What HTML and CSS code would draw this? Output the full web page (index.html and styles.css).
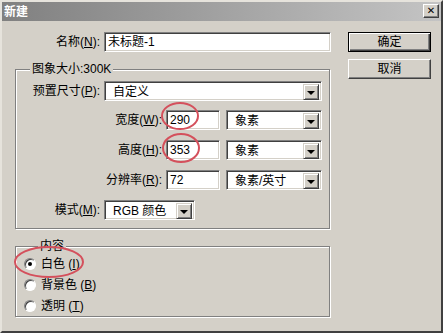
FILE: index.html
```html
<!DOCTYPE html>
<html lang="zh-CN">
<head>
    <meta charset="UTF-8">
    <title>新建</title>
    <link rel="stylesheet" href="styles.css">
</head>
<body>
    <div class="window">
        <div class="titlebar">
            <span class="title">新建</span>
            <button class="close">&#x2715;</button>
        </div>
        <div class="content">
            <div class="main">
                <div class="row nameRow">
                    <label class="lbl w85">名称(<u>N</u>):</label>
                    <div class="field w227">未标题-1</div>
                </div>

                <fieldset class="group sizeGroup">
                    <legend>图象大小:300K</legend>
                    <div class="row r1">
                        <label class="lbl w84">预置尺寸(<u>P</u>):</label>
                        <div class="select w218"><span>自定义</span><i class="arrow"></i></div>
                    </div>
                    <div class="row r2">
                        <label class="lbl w146">宽度(<u>W</u>):</label>
                        <div class="field w54">290</div>
                        <div class="select w96"><span>象素</span><i class="arrow"></i></div>
                    </div>
                    <div class="row r3">
                        <label class="lbl w146">高度(<u>H</u>):</label>
                        <div class="field w54">353</div>
                        <div class="select w96"><span>象素</span><i class="arrow"></i></div>
                    </div>
                    <div class="row r3">
                        <label class="lbl w146">分辨率(<u>R</u>):</label>
                        <div class="field w54">72</div>
                        <div class="select w96"><span>象素/英寸</span><i class="arrow"></i></div>
                    </div>
                    <div class="row r3">
                        <label class="lbl w84">模式(<u>M</u>):</label>
                        <div class="select w91"><span>RGB 颜色</span><i class="arrow"></i></div>
                    </div>
                </fieldset>

                <fieldset class="group contentGroup">
                    <legend>内容</legend>
                    <div class="radioRow"><span class="radio checked"></span>白色 (<u>I</u>)</div>
                    <div class="radioRow"><span class="radio"></span>背景色 (<u>B</u>)</div>
                    <div class="radioRow"><span class="radio"></span>透明 (<u>T</u>)</div>
                </fieldset>
            </div>

            <div class="buttons">
                <button class="btn default">确定</button>
                <button class="btn">取消</button>
            </div>
        </div>

        <!-- marcas rojas sobre la captura -->
        <svg class="marks" width="443" height="333" viewBox="0 0 443 333">
            <ellipse cx="180" cy="116" rx="18" ry="13" />
            <ellipse cx="181" cy="148" rx="18" ry="14" />
            <ellipse cx="49" cy="262" rx="34" ry="15" />
        </svg>
    </div>
</body>
</html>
```

FILE: styles.css
```css
* {box-sizing: border-box}
body {
    margin: 0;
    padding: 0;
    font-family: "Liberation Sans", "Noto Sans CJK SC", sans-serif;
    font-size: 12px;
    line-height: 14px;
    color: #000;
}
.window {
    position: relative;
    width: 443px;
    height: 333px;
    background: #d4d0c8;
    border-top: 2px solid #e6e3dc;
    border-left: 2px solid #e6e3dc;
    border-right: 2px solid #404040;
    border-bottom: 2px solid #404040;
}
.titlebar {
    height: 19px;
    display: flex;
    align-items: flex-start;
    justify-content: space-between;
    background: linear-gradient(to right, #808080, #c4c4c4);
}
.title {
    color: #fff;
    font-weight: bold;
    padding: 3px 0 0 2px;
}
.close {
    width: 16px;
    height: 14px;
    margin: 2px 2px 0 0;
    padding: 0;
    font-size: 10px;
    font-weight: bold;
    line-height: 10px;
    font-family: "DejaVu Sans", sans-serif;
    background: #d4d0c8;
    border: 1px solid;
    border-color: #fff #404040 #404040 #fff;
    box-shadow: inset -1px -1px 0 #808080;
}
.content {
    display: flex;
    padding-left: 13px;
}
.main {
    width: 317px;
}
.row {
    display: flex;
    align-items: center;
}
.nameRow {
    margin-top: 11px;
}
.lbl {
    text-align: right;
    margin-right: 4px;
    white-space: nowrap;
}
.w84 {width: 84px}
.w85 {width: 85px}
.w146 {width: 146px}
.w227 {width: 227px}
.w218 {width: 218px}
.w96 {width: 96px}
.w91 {width: 91px}
.w54 {width: 54px; margin-right: 6px}

.field, .select {
    height: 20px;
    background: #fff;
    border: 1px solid;
    border-color: #808080 #fff #fff #808080;
    box-shadow: inset 1px 1px 0 #404040, inset -1px -1px 0 #d4d0c8;
    padding: 2px 3px 0 3px;
    white-space: nowrap;
}
.select {
    display: flex;
    justify-content: space-between;
    padding: 2px 2px 2px 8px;
}
.select span {
    padding-top: 1px;
}
.arrow {
    width: 16px;
    height: 16px;
    background: #d4d0c8;
    border: 1px solid;
    border-color: #d4d0c8 #404040 #404040 #d4d0c8;
    box-shadow: inset 1px 1px 0 #fff, inset -1px -1px 0 #808080;
    display: flex;
    align-items: center;
    justify-content: center;
}
.arrow::after {
    content: "";
    border-left: 4px solid transparent;
    border-right: 4px solid transparent;
    border-top: 4px solid #000;
    margin-top: 1px;
}

.group {
    margin: 0;
    padding: 0;
    min-width: 0;
    border: 1px solid #808080;
    box-shadow: 1px 1px 0 #fff, inset 1px 1px 0 #fff;
    width: 315px;
}
.group legend {
    margin-left: 14px;
    padding: 0 2px;
    background: #d4d0c8;
    line-height: 14px;
}
.sizeGroup {
    margin-top: 10px;
    padding-bottom: 8px;
}
.r1 {margin-top: 5px}
.r2 {margin-top: 9px}
.r3 {margin-top: 10px}

.contentGroup {
    margin-top: 10px;
    padding: 0 0 0 8px;
}
.radioRow {
    height: 21px;
    display: flex;
    align-items: center;
    white-space: pre;
}
.radio {
    width: 12px;
    height: 12px;
    margin-right: 5px;
    border-radius: 50%;
    background: #fff;
    border: 1px solid;
    border-color: #808080 #fff #fff #808080;
    box-shadow: inset 1px 1px 0 #404040;
    display: flex;
    align-items: center;
    justify-content: center;
}
.radio.checked::after {
    content: "";
    width: 4px;
    height: 4px;
    border-radius: 50%;
    background: #000;
}

.buttons {
    margin-left: 16px;
    margin-top: 11px;
    display: flex;
    flex-direction: column;
    gap: 7px;
}
.btn {
    width: 83px;
    height: 20px;
    padding: 0;
    font: inherit;
    background: #d4d0c8;
    border: 1px solid;
    border-color: #fff #404040 #404040 #fff;
    box-shadow: inset -1px -1px 0 #808080;
}
.btn.default {
    border: 1px solid #000;
    box-shadow: inset 1px 1px 0 #fff, inset -1px -1px 0 #404040, inset -2px -2px 0 #808080;
}

.marks {
    position: absolute;
    left: -2px;
    top: -2px;
    pointer-events: none;
}
.marks ellipse {
    fill: none;
    stroke: #d4505c;
    stroke-width: 2;
}
```
